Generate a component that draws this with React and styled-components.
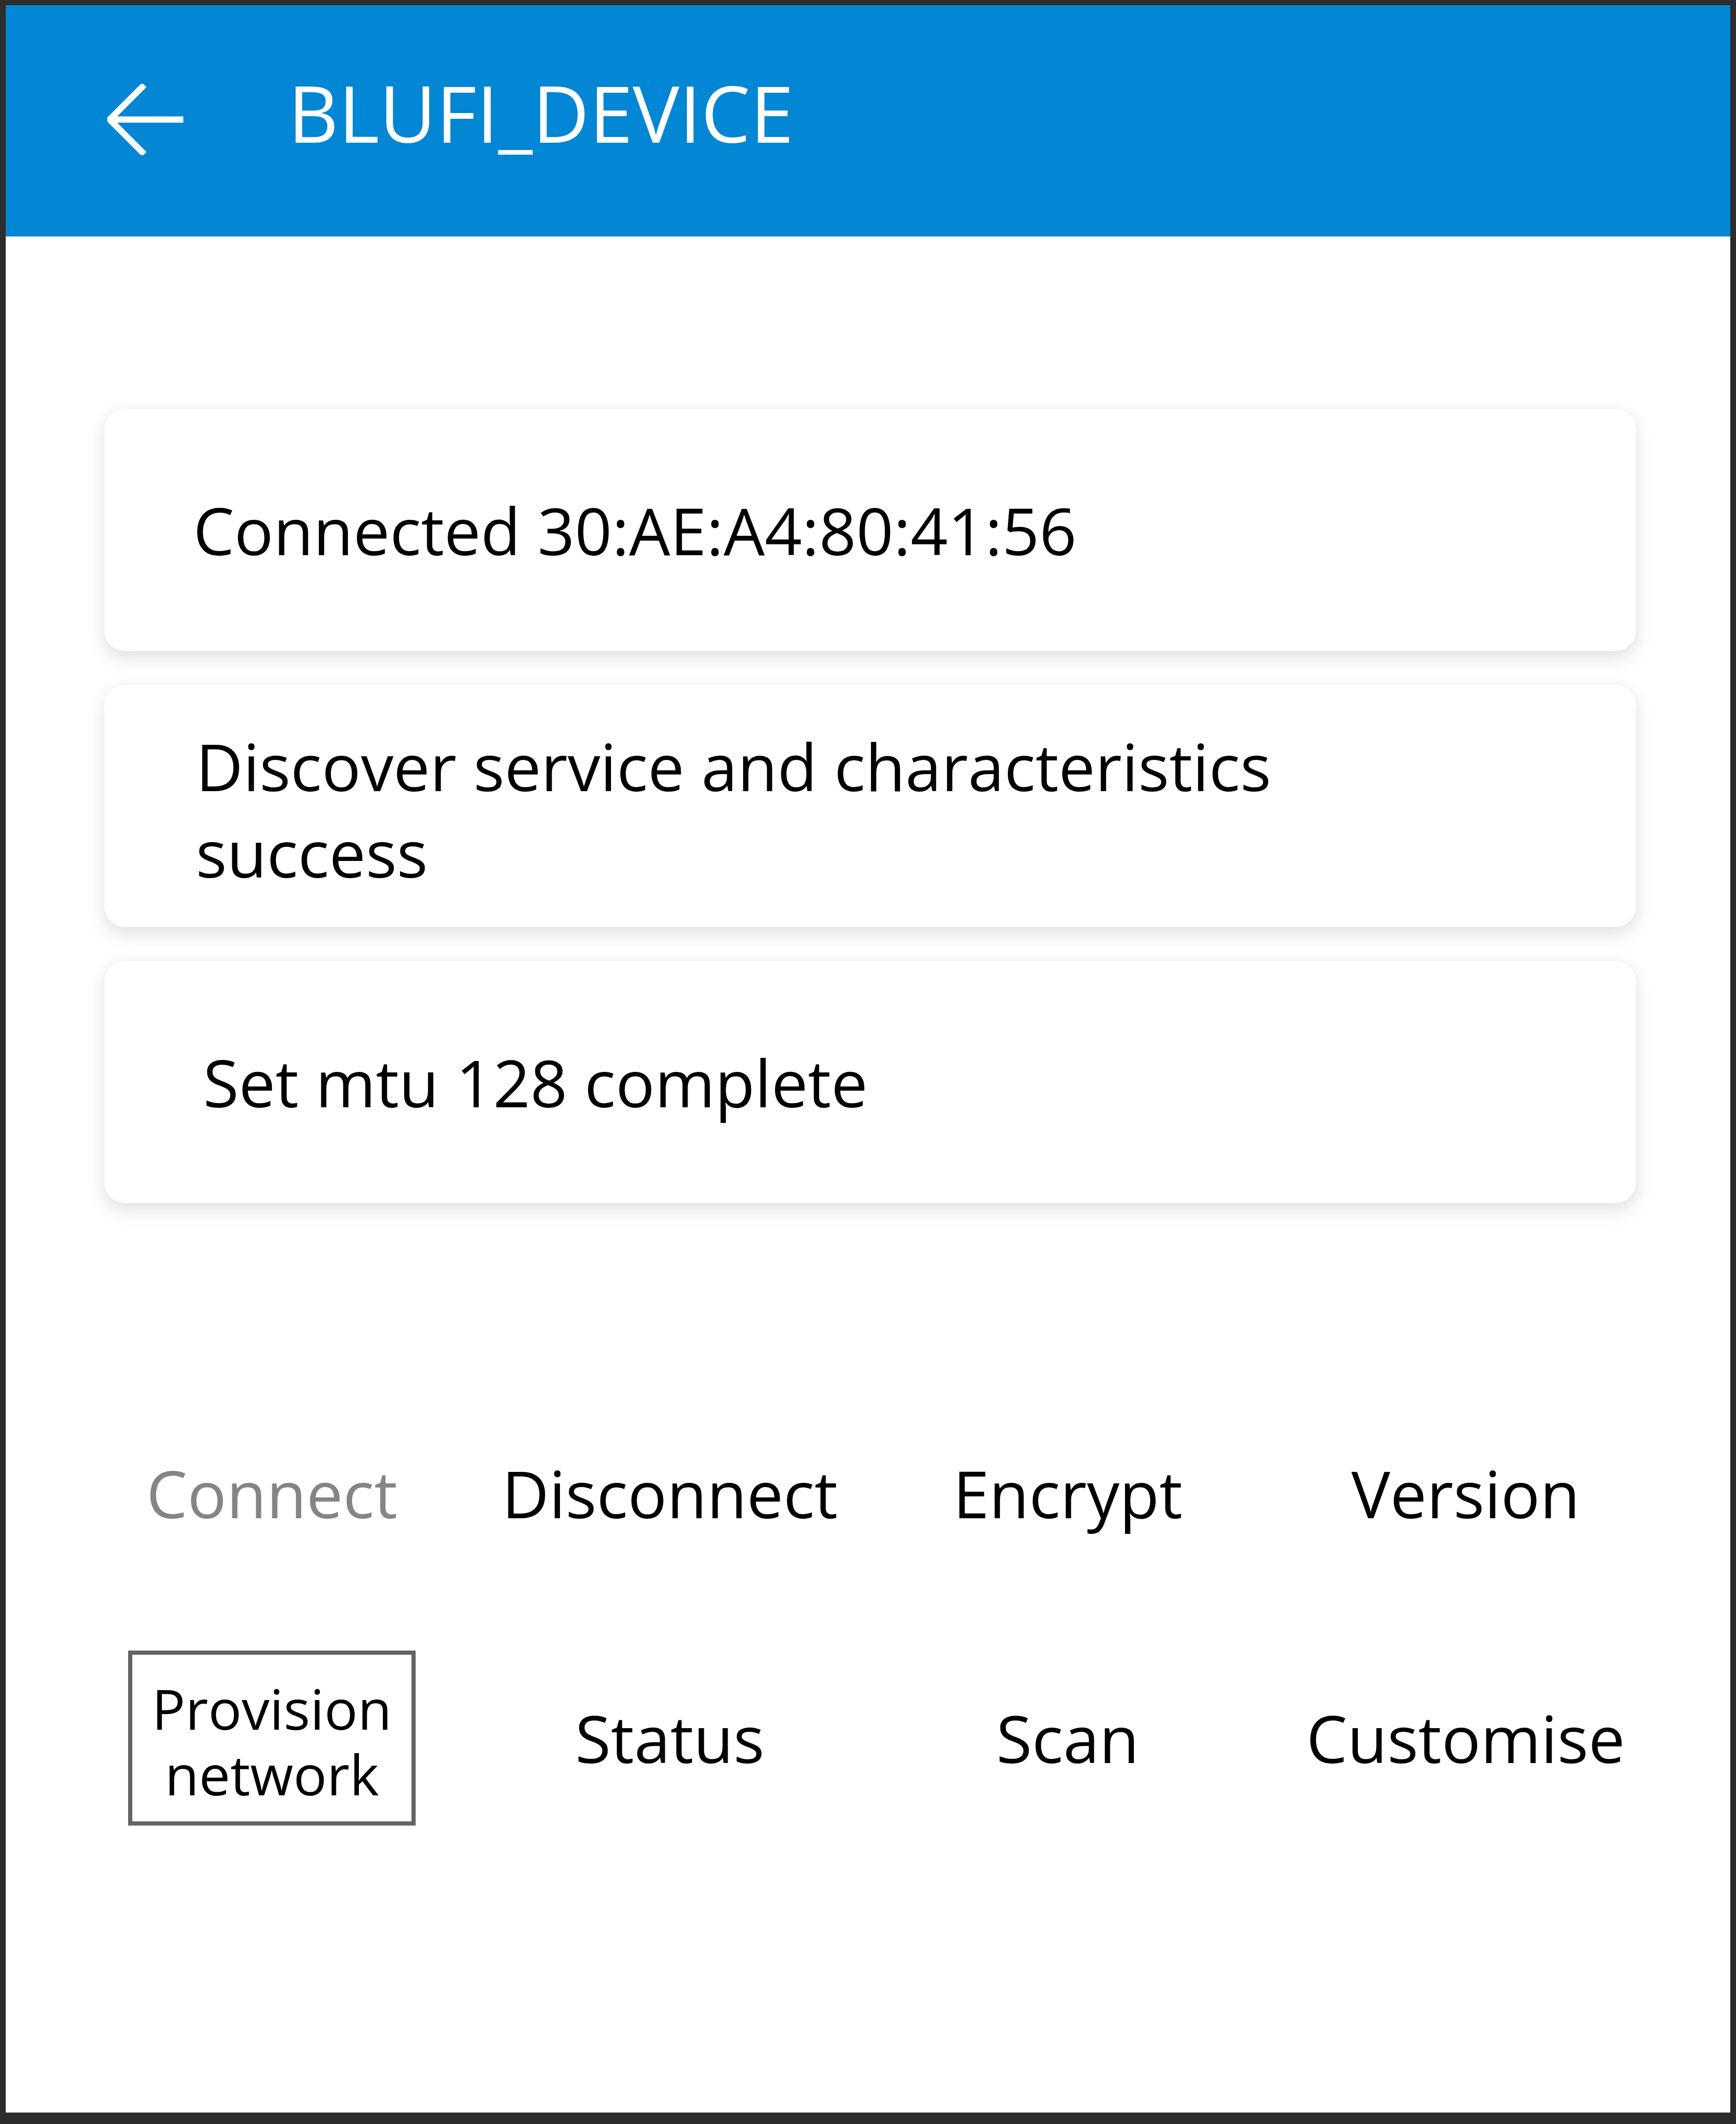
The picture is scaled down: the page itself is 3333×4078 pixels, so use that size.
import React from 'react'
import styled, { createGlobalStyle } from 'styled-components'

const GlobalStyle = createGlobalStyle`
  html, body {
    margin: 0;
    padding: 0;
    background: #2d2d2d;
  }
  body {
    font-family: 'Open Sans', 'Noto Sans', sans-serif;
  }
`

const Frame = styled.div`
  margin: 10px 11px 22px 11px;
  height: 4046px;
  background: #fff;
  display: flex;
  flex-direction: column;
`

const AppBar = styled.header`
  height: 444px;
  background: #0386d3;
  display: flex;
  align-items: center;
  padding-left: 195px;
  gap: 201px;
  flex-shrink: 0;
`

const BackButton = styled.span`
  display: flex;
  width: 146px;
  height: 137px;
  margin-bottom: 6px;
`

const Title = styled.h1`
  margin: 0 0 32px 0;
  color: #fff;
  font-weight: 400;
  font-size: 150px;
  line-height: 1;
  letter-spacing: 0;
`

const LogList = styled.div`
  display: flex;
  flex-direction: column;
  gap: 65px;
  padding: 331px 181px 0 189px;
`

const LogCard = styled.div`
  height: 465px;
  box-sizing: border-box;
  background: #fff;
  border-radius: 40px;
  box-shadow: 0 16px 36px rgba(0, 0, 0, 0.1), 0 0 30px rgba(0, 0, 0, 0.04);
  display: flex;
  align-items: center;
  padding-left: ${props => props.indent}px;
  padding-top: ${props => props.shift || 0}px;
`

const LogText = styled.p`
  margin: 0;
  max-width: 2300px;
  font-size: 125px;
  line-height: 166px;
  color: #000;
`

const ActionGrid = styled.div`
  display: grid;
  grid-template-columns: repeat(4, 764px);
  grid-auto-rows: 470px;
  padding: 322px 0 0 129px;
`

const ActionCell = styled.div`
  display: flex;
  align-items: center;
  justify-content: center;
`

const ActionButton = styled.button`
  background: none;
  border: ${props => (props.focused ? '8px solid #646464' : 'none')};
  padding: ${props => (props.focused ? '12px 38px 0' : '0')};
  height: ${props => (props.focused ? '336px' : 'auto')};
  box-sizing: border-box;
  font-family: inherit;
  font-size: ${props => (props.focused ? '107px' : '125px')};
  line-height: ${props => (props.focused ? '126px' : '1.2')};
  color: ${props => (props.disabled ? '#858585' : '#000')};
  text-align: center;
  cursor: pointer;
`

const logs = [
  { text: 'Connected 30:AE:A4:80:41:56', indent: 171 },
  { text: 'Discover service and characteristics success', indent: 176, shift: 12 },
  { text: 'Set mtu 128 complete', indent: 190 },
]

const actions = [
  { label: 'Connect', disabled: true },
  { label: 'Disconnect' },
  { label: 'Encrypt' },
  { label: 'Version' },
  { label: <>Provision<br />network</>, focused: true },
  { label: 'Status' },
  { label: 'Scan' },
  { label: 'Customise' },
]

const ArrowBack = () => (
  <svg width="146" height="137" viewBox="0 0 146 137" fill="none">
    <path
      d="M146 68.5H6M71 2L4.5 68.5L71 135"
      stroke="#fff"
      strokeWidth="12"
      strokeLinejoin="miter"
    />
  </svg>
)

export default function App() {
  return (
    <>
      <GlobalStyle />
      <Frame>
        <AppBar>
          <BackButton>
            <ArrowBack />
          </BackButton>
          <Title>BLUFI_DEVICE</Title>
        </AppBar>
        <LogList>
          {logs.map((log, i) => (
            <LogCard key={i} indent={log.indent} shift={log.shift}>
              <LogText>{log.text}</LogText>
            </LogCard>
          ))}
        </LogList>
        <ActionGrid>
          {actions.map((a, i) => (
            <ActionCell key={i}>
              <ActionButton disabled={a.disabled} focused={a.focused}>
                {a.label}
              </ActionButton>
            </ActionCell>
          ))}
        </ActionGrid>
      </Frame>
    </>
  )
}
